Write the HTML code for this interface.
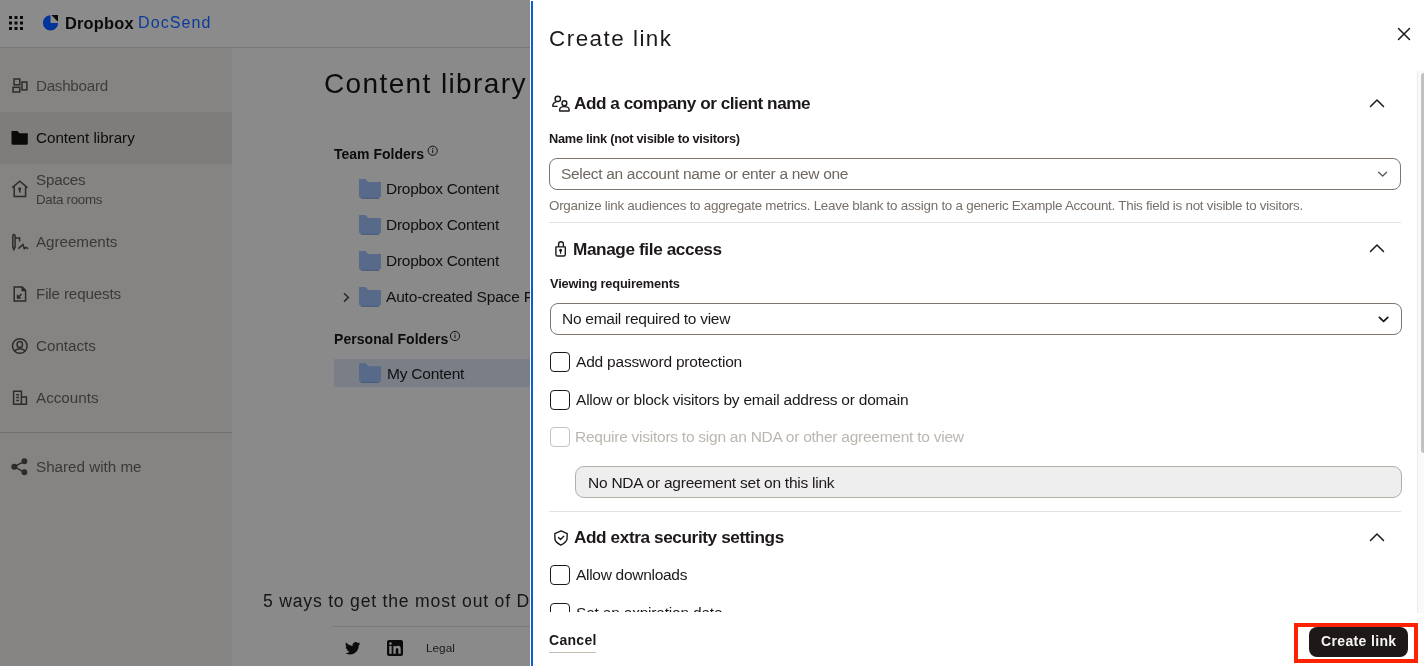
<!DOCTYPE html>
<html><head><meta charset="utf-8">
<style>
*{margin:0;padding:0;box-sizing:border-box}
html,body{width:1424px;height:666px;overflow:hidden;background:#8a8a8a;font-family:"Liberation Sans",sans-serif}
.a{position:absolute}
.t{position:absolute;white-space:nowrap;line-height:1;font-family:"Liberation Sans",sans-serif;will-change:transform}
svg{position:absolute;overflow:visible}
</style></head><body>
<!-- top bar -->
<div class="a" style="left:0;top:0;width:530px;height:47px;background:#8b8b8b"></div>
<div class="a" style="left:0;top:47px;width:530px;height:1px;background:#777"></div>
<svg style="left:0;top:0" width="60" height="40">
 <g fill="#0a0a0a">
  <rect x="9" y="16" width="3" height="3"/><rect x="14.5" y="16" width="3" height="3"/><rect x="20" y="16" width="3" height="3"/>
  <rect x="9" y="21.5" width="3" height="3"/><rect x="14.5" y="21.5" width="3" height="3"/><rect x="20" y="21.5" width="3" height="3"/>
  <rect x="9" y="27" width="3" height="3"/><rect x="14.5" y="27" width="3" height="3"/><rect x="20" y="27" width="3" height="3"/>
 </g>
 <path d="M50.5 15.3 A7.6 7.6 0 1 0 58.1 22.9 L50.5 22.9 Z" fill="#00349a"/>
 <path d="M51.3 15 L58 15 L58 21.7 Z" fill="#0a0a0a"/>
</svg>
<div class="t" style="left:64.5px;top:14.86px;font-size:16.4px;letter-spacing:0.2px;font-weight:700;color:#0a0a0a">Dropbox</div>
<div class="t" style="left:138.2px;top:15.2px;font-size:16px;color:#0b3a9a;letter-spacing:1.1px">DocSend</div>

<!-- sidebar -->
<div class="a" style="left:0;top:48px;width:232px;height:618px;background:#858482"></div>
<div class="a" style="left:0;top:112px;width:232px;height:52px;background:#7e7d7b"></div>
<div class="a" style="left:0;top:432px;width:232px;height:1px;background:#72716f"></div>

<div class="t" style="left:36px;top:77.9px;font-size:15.2px;letter-spacing:-0.27px;color:#403d3a">Dashboard</div>
<div class="t" style="left:36px;top:129.8px;font-size:15.2px;color:#0c0c0c">Content library</div>
<div class="t" style="left:36px;top:172.1px;font-size:15.2px;letter-spacing:-0.2px;color:#3b3936">Spaces</div>
<div class="t" style="left:36px;top:193.4px;font-size:13.4px;letter-spacing:-0.3px;color:#3b3936">Data rooms</div>
<div class="t" style="left:36px;top:233.9px;font-size:15.2px;letter-spacing:-0.05px;color:#3b3936">Agreements</div>
<div class="t" style="left:36px;top:285.9px;font-size:15.2px;letter-spacing:-0.15px;color:#3b3936">File requests</div>
<div class="t" style="left:36px;top:337.9px;font-size:15.2px;color:#3b3936">Contacts</div>
<div class="t" style="left:36px;top:389.9px;font-size:15.2px;color:#3b3936">Accounts</div>
<div class="t" style="left:36px;top:459.3px;font-size:15.2px;color:#3b3936">Shared with me</div>

<!-- sidebar icons -->
<svg style="left:0;top:0" width="232" height="500" fill="none" stroke="#2e2b28" stroke-width="1.5">
 <rect x="14" y="79" width="5.8" height="5.8"/>
 <rect x="13" y="87.3" width="6.8" height="4.7"/>
 <rect x="22" y="82" width="4.9" height="7.9"/>
 <path d="M11.5 131 L17.5 131 L19.5 133.3 L27.8 133.3 L27.8 143.2 Q27.8 144.7 26.3 144.7 L13 144.7 Q11.5 144.7 11.5 143.2 Z" fill="#0a0a08" stroke="none"/>
 <path d="M12.2 187.6 L19.8 181.2 L27.4 187.6 M14.2 185.8 V196.4 H25.6 V185.8"/>
 <circle cx="19.7" cy="188.7" r="1.5" fill="#2e2b28" stroke="none"/><path d="M19.7 189.5 V192.6" stroke-width="1.6"/>
 <path d="M12.8 236.5 Q12.8 234.4 13.9 234.4 Q15.1 234.4 15.1 236.5 V247 L13.9 249.4 L12.8 247 Z M15.1 238 H19.6 V241.6"/>
 <path d="M18.3 248.6 L23 244.6 L24.3 248.8 L26 247.4 L28.3 248.6"/>
 <path d="M14.2 287 H22.2 L25.6 290.4 V301 H14.2 Z" />
 <path d="M22.2 287 V290.4 H25.6" fill="#2e2b28"/>
 <path d="M21.6 294 L17.8 297.8 M17.6 294.8 V297.9 H20.7" stroke-width="1.6"/>
 <circle cx="19.8" cy="346" r="7.3"/>
 <ellipse cx="19.8" cy="344.5" rx="2.7" ry="3.1"/>
 <path d="M14.6 350.6 Q19.8 346.8 25 350.6"/>
 <path d="M13.6 391.3 H21.4 V404.3 H13.6 Z M21.4 397.1 H26.4 V404.3 H21.4 M16.3 394.7 H19 M16.3 397.6 H19 M16.3 400.6 H19"/>
 <path d="M14.3 466.7 L24.4 461.3 M14.3 466.7 L24.4 472.3"/>
 <circle cx="14.3" cy="466.7" r="2.3" fill="#2e2b28"/>
 <circle cx="24.4" cy="461.3" r="2.2" fill="#2e2b28"/>
 <circle cx="24.4" cy="472.3" r="2.2" fill="#2e2b28"/>
</svg>

<!-- main -->
<div class="t" style="left:324.2px;top:70.4px;font-size:28px;color:#0c0c0c;letter-spacing:1.38px">Content library</div>
<div class="t" style="left:334px;top:146.9px;font-size:14px;font-weight:700;color:#0c0c0c">Team Folders</div>
<div class="t" style="left:333.7px;top:332px;font-size:14px;letter-spacing:0.05px;font-weight:700;color:#0c0c0c">Personal Folders</div>
<div class="a" style="left:334px;top:359px;width:196px;height:28px;background:#797e87"></div>
<div class="t" style="left:385.7px;top:180.52px;font-size:15.5px;letter-spacing:-0.28px;color:#101010">Dropbox Content</div>
<div class="t" style="left:385.7px;top:216.52px;font-size:15.5px;letter-spacing:-0.28px;color:#101010">Dropbox Content</div>
<div class="t" style="left:385.7px;top:252.52px;font-size:15.5px;letter-spacing:-0.28px;color:#101010">Dropbox Content</div>
<div class="t" style="left:385.7px;top:288.52px;font-size:15.5px;letter-spacing:-0.19px;color:#101010">Auto-created Space Folders</div>
<div class="t" style="left:386.7px;top:365.82px;font-size:15.5px;letter-spacing:-0.21px;color:#101010">My Content</div>


<!-- main icons -->
<svg style="left:0;top:0" width="530" height="666">
 <g fill="none" stroke="#111" stroke-width="1">
  <circle cx="432.7" cy="150.7" r="4.6"/>
  <circle cx="455" cy="336" r="4.6"/>
 </g>
 <g fill="#111">
  <rect x="432.2" y="149.6" width="1" height="3.3"/><rect x="432.2" y="147.9" width="1" height="1"/>
  <rect x="454.5" y="334.9" width="1" height="3.3"/><rect x="454.5" y="333.2" width="1" height="1"/>
 </g>
 <defs><g id="fold"><path d="M0 0.8 Q0 0 0.8 0 L6.8 0 L9 3 L21.2 3 Q22 3 22 3.8 L22 17.3 L19.8 19.7 L2.2 19.7 L0 17.3 Z"/><rect x="2.4" y="18.7" width="17.2" height="1" fill="#4a5a75"/></g></defs>
 <g fill="#576a89">
  <use href="#fold" x="359" y="179"/>
  <use href="#fold" x="359" y="215"/>
  <use href="#fold" x="359" y="251"/>
  <use href="#fold" x="359" y="287"/>
  <use href="#fold" x="359" y="363.2"/>
 </g>
 <path d="M344 293.2 L348.4 297.4 L344 301.6" fill="none" stroke="#2a2a2a" stroke-width="1.5"/>
 <path transform="translate(345,640.6) scale(0.64)" fill="#0b0b0b" d="M23.953 4.57a10 10 0 01-2.825.775 4.958 4.958 0 002.163-2.723c-.951.555-2.005.959-3.127 1.184a4.92 4.92 0 00-8.384 4.482C7.69 8.095 4.067 6.13 1.64 3.162a4.822 4.822 0 00-.666 2.475c0 1.71.87 3.213 2.188 4.096a4.904 4.904 0 01-2.228-.616v.06a4.923 4.923 0 003.946 4.827 4.996 4.996 0 01-2.212.085 4.936 4.936 0 004.604 3.417 9.867 9.867 0 01-6.102 2.105c-.39 0-.779-.023-1.17-.067a13.995 13.995 0 007.557 2.209c9.053 0 13.998-7.496 13.998-13.985 0-.21 0-.42-.015-.63A9.935 9.935 0 0024 4.59z"/>
 <rect x="387" y="640" width="16" height="16" rx="2" fill="#0b0b0b"/>
 <g fill="#8a8a8a">
  <rect x="389.3" y="646" width="2.3" height="7.8"/>
  <circle cx="390.45" cy="643.6" r="1.3"/>
  <path d="M393.4 646 H395.6 V647.1 Q396.4 645.8 398.2 645.8 Q400.7 645.8 400.7 648.9 V653.8 H398.4 V649.4 Q398.4 647.9 397.2 647.9 Q395.7 647.9 395.7 649.6 V653.8 H393.4 Z"/>
 </g>
</svg>

<div class="t" style="left:263.3px;top:592.9px;font-size:17.6px;color:#161616;letter-spacing:0.79px">5 ways to get the most out of DocSend</div>
<div class="a" style="left:332px;top:626px;width:198px;height:1px;background:#7a7a7a"></div>
<div class="t" style="left:426.4px;top:643px;font-size:11.8px;color:#1a1a1a">Legal</div>

<!-- modal -->
<div class="a" style="left:530px;top:0;width:894px;height:666px;background:#fff"></div>
<div class="a" style="left:531px;top:1px;width:2px;height:665px;background:#0a5fd9"></div>

<div class="t" style="left:549.2px;top:28.3px;font-size:22.4px;color:#1e1919;letter-spacing:1.5px">Create link</div>

<div class="t" style="left:573.5px;top:95.25px;font-size:17.2px;letter-spacing:-0.47px;font-weight:700;color:#1e1919">Add a company or client name</div>
<div class="t" style="left:549px;top:132.96px;font-size:12.8px;letter-spacing:-0.28px;font-weight:700;color:#1e1919">Name link (not visible to visitors)</div>
<div class="a" style="left:549px;top:158px;width:852px;height:32px;border:1px solid #7d756e;border-radius:8px"></div>
<div class="t" style="left:561.3px;top:165.5px;font-size:15.5px;letter-spacing:-0.31px;color:#6e6761">Select an account name or enter a new one</div>
<div class="t" style="left:549px;top:198.9px;font-size:13.4px;letter-spacing:-0.25px;color:#776f69">Organize link audiences to aggregate metrics. Leave blank to assign to a generic Example Account. This field is not visible to visitors.</div>
<div class="a" style="left:549px;top:222px;width:852px;height:1px;background:#e3e0dd"></div>

<div class="t" style="left:572.9px;top:240.6px;font-size:17.2px;letter-spacing:-0.39px;font-weight:700;color:#1e1919">Manage file access</div>
<div class="t" style="left:550.2px;top:277.85px;font-size:12.8px;letter-spacing:-0.15px;font-weight:700;color:#1e1919">Viewing requirements</div>
<div class="a" style="left:550px;top:303px;width:852px;height:32px;border:1px solid #7d756e;border-radius:8px"></div>
<div class="t" style="left:562px;top:310.8px;font-size:15.5px;letter-spacing:-0.27px;color:#1e1919">No email required to view</div>

<div class="a" style="left:550px;top:352px;width:20px;height:20px;border:1.5px solid #1e1919;border-radius:4px"></div>
<div class="t" style="left:575.5px;top:353.68px;font-size:15.5px;letter-spacing:-0.2px;color:#1e1919">Add password protection</div>
<div class="a" style="left:550px;top:390px;width:20px;height:20px;border:1.5px solid #1e1919;border-radius:4px"></div>
<div class="t" style="left:575.5px;top:391.68px;font-size:15.5px;letter-spacing:-0.21px;color:#1e1919">Allow or block visitors by email address or domain</div>
<div class="a" style="left:550px;top:427px;width:20px;height:20px;border:1.5px solid #c9c3bc;border-radius:4px"></div>
<div class="t" style="left:575px;top:428.68px;font-size:15.5px;letter-spacing:-0.25px;color:#bcb6af">Require visitors to sign an NDA or other agreement to view</div>
<div class="a" style="left:575px;top:466px;width:827px;height:32px;border:1px solid #b5aea7;border-radius:9px;background:#eeeeee"></div>
<div class="t" style="left:587.8px;top:474.8px;font-size:15.5px;letter-spacing:-0.24px;color:#1e1919">No NDA or agreement set on this link</div>
<div class="a" style="left:549px;top:511px;width:852px;height:1px;background:#e3e0dd"></div>

<div class="t" style="left:573.5px;top:529.25px;font-size:17.2px;letter-spacing:-0.4px;font-weight:700;color:#1e1919">Add extra security settings</div>
<div class="a" style="left:550px;top:565px;width:20px;height:20px;border:1.5px solid #1e1919;border-radius:4px"></div>
<div class="t" style="left:575.5px;top:566.68px;font-size:15.5px;letter-spacing:-0.29px;color:#1e1919">Allow downloads</div>
<div class="a" style="left:540px;top:590px;width:860px;height:22px;overflow:hidden">
 <div class="a" style="left:10px;top:13px;width:20px;height:20px;border:1.5px solid #1e1919;border-radius:4px"></div>
 <div class="t" style="left:35.5px;top:14.68px;font-size:15.5px;letter-spacing:-0.2px;color:#1e1919">Set an expiration date</div>
</div>


<!-- modal icons -->
<svg style="left:0;top:0" width="1424" height="666" fill="none" stroke="#1e1919" stroke-width="1.5" stroke-linecap="round" stroke-linejoin="round">
 <path d="M1398.5 28.5 L1409.5 39.5 M1409.5 28.5 L1398.5 39.5"/>
 <path d="M1370.5 106.5 L1377 100 L1383.5 106.5"/>
 <path d="M1370.5 251.5 L1377 245 L1383.5 251.5"/>
 <path d="M1370.5 540.5 L1377 534 L1383.5 540.5"/>
 <path d="M1378.6 172.2 L1382.6 176 L1386.6 172.2" stroke="#5e5751" stroke-width="1.3"/>
 <path d="M1379.4 317.4 L1383.6 321.4 L1387.8 317.4" stroke-width="1.8"/>
 <ellipse cx="557.8" cy="98.9" rx="2.7" ry="2.6" stroke-width="1.4"/>
 <path d="M557 106.4 H553.4 Q552.6 106.4 552.8 105.4 Q553.4 102.2 555.9 102.1" stroke-width="1.4"/>
 <ellipse cx="564.4" cy="103.3" rx="2.4" ry="2.5" stroke-width="1.4"/>
 <path d="M559.7 111 V109.6 Q559.7 106.6 564.4 106.6 Q569.1 106.6 569.1 109.6 V111 Z" stroke-width="1.4"/>
 <path d="M555.9 246.9 H565.3 V254.4 Q565.3 256 563.7 256 H557.5 Q555.9 256 555.9 254.4 Z M558.6 246.9 V244.2 Q558.6 241.7 561 241.7 Q563.4 241.7 563.4 244.2 V246.9" stroke-width="1.4"/>
 <circle cx="560.6" cy="250.3" r="0.9" fill="#1e1919" stroke-width="1.2"/>
 <path d="M560.6 251 V253.3" stroke-width="1.2"/>
 <path d="M561.1 530.8 L567.2 533.7 L567 539.4 Q566.3 542.3 560.8 545.1 Q555.3 542.3 555 539.4 L554.8 533.7 Z" stroke-width="1.4"/>
 <path d="M558.5 537.6 L560.5 539.5 L563.8 536.3" stroke-width="1.4"/>
</svg>

<!-- scrollbar -->
<div class="a" style="left:1417px;top:70px;width:7px;height:543px;background:#fafafa;border-left:1px solid #ececec"></div>
<div class="a" style="left:1421px;top:73px;width:6px;height:380px;background:#c1c1c1;border-radius:3px"></div>

<!-- footer -->
<div class="t" style="left:549.3px;top:633.1px;font-size:14px;letter-spacing:0.3px;font-weight:700;color:#1e1919">Cancel</div>
<div class="a" style="left:549px;top:652px;width:47px;height:1px;background:#c4bbb3"></div>
<div class="a" style="left:1294px;top:623px;width:124px;height:40px;border:4px solid #ff2200"></div>
<div class="a" style="left:1309px;top:627px;width:99px;height:30px;background:#1e1919;border-radius:8px"></div>
<div class="t" style="left:1321px;top:634.17px;font-size:14px;letter-spacing:0.35px;font-weight:700;color:#f7f5f2">Create link</div>

</body></html>
